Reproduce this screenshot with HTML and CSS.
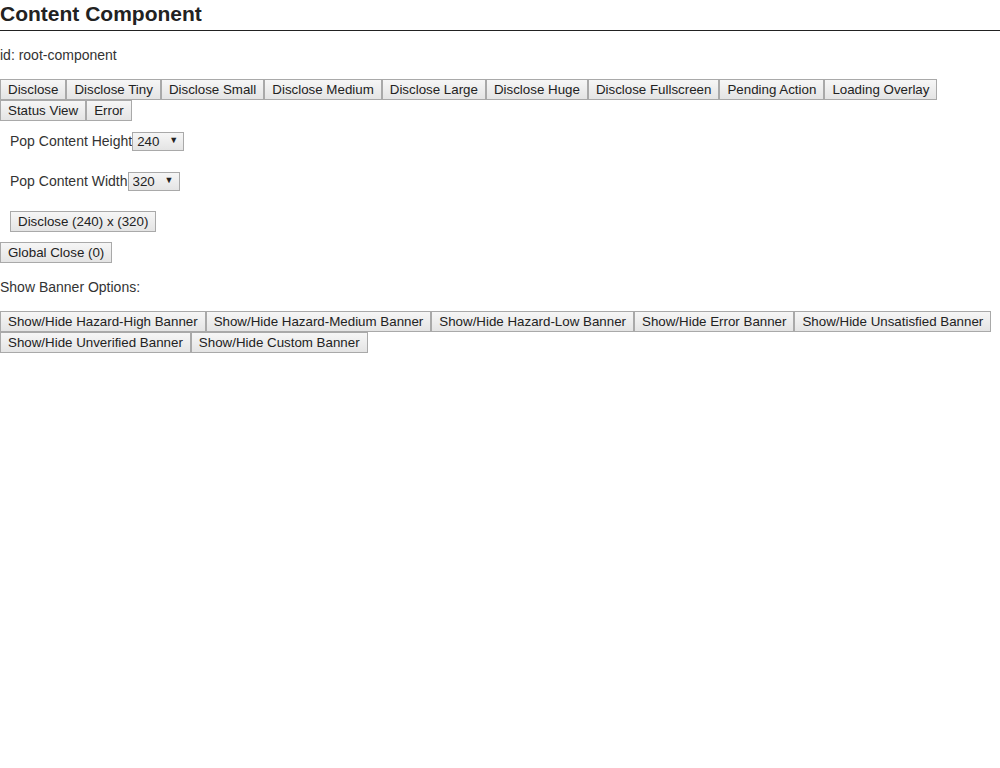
FILE: index.html
```html
<!DOCTYPE html>
<html>
<head>
<meta charset="utf-8">
<link rel="stylesheet" href="styles.css">
</head>
<body>
<h1 class="title">Content Component</h1>
<p class="ident">id: root-component</p>
<div class="btn-row">
  <button class="btn">Disclose</button><button class="btn">Disclose Tiny</button><button class="btn">Disclose Small</button><button class="btn">Disclose Medium</button><button class="btn">Disclose Large</button><button class="btn">Disclose Huge</button><button class="btn">Disclose Fullscreen</button><button class="btn">Pending Action</button><button class="btn">Loading Overlay</button><button class="btn">Status View</button><button class="btn">Error</button>
</div>
<div class="pop">
  <div class="field">
    <span class="label">Pop Content Height</span>
    <span class="select-wrap"><select class="select"><option>240</option></select></span>
  </div>
  <div class="field">
    <span class="label">Pop Content Width</span>
    <span class="select-wrap"><select class="select"><option>320</option></select></span>
  </div>
  <button class="btn">Disclose (240) x (320)</button>
</div>
<div class="btn-row">
  <button class="btn">Global Close (0)</button>
</div>
<p class="banner-title">Show Banner Options:</p>
<div class="btn-row">
  <button class="btn">Show/Hide Hazard-High Banner</button><button class="btn">Show/Hide Hazard-Medium Banner</button><button class="btn">Show/Hide Hazard-Low Banner</button><button class="btn">Show/Hide Error Banner</button><button class="btn">Show/Hide Unsatisfied Banner</button><button class="btn">Show/Hide Unverified Banner</button><button class="btn">Show/Hide Custom Banner</button>
</div>
</body>
</html>
```
FILE: styles.css
```css
html, body {
  margin: 0;
  padding: 0;
  background: #fff;
}
body {
  font-family: "Liberation Sans", Arial, sans-serif;
  font-size: 14px;
  color: #333;
}
.title {
  margin: 0;
  font-size: 21px;
  font-weight: bold;
  color: #222;
  line-height: 24px;
  padding: 2px 0 4px;
  border-bottom: 1px solid #222;
}
.ident {
  margin: 16px 0;
  line-height: 16px;
}
.btn-row {
  display: flex;
  flex-wrap: wrap;
  align-items: flex-start;
}
.btn {
  font-family: "Liberation Sans", Arial, sans-serif;
  font-size: 13.333px;
  color: #222;
  height: 21px;
  line-height: 17px;
  padding: 1px 7px;
  margin: 0;
  border: 1px solid #a9a9a9;
  border-radius: 0;
  background: linear-gradient(#f6f6f6, #e4e4e4);
  box-sizing: border-box;
  white-space: nowrap;
}
.pop {
  padding: 10px;
  display: flex;
  flex-direction: column;
  align-items: flex-start;
  gap: 20px;
}
.field {
  display: flex;
  align-items: center;
  height: 20px;
}
.label {
  line-height: 16px;
}
.select-wrap {
  position: relative;
  display: inline-block;
}
.select-wrap::after {
  content: "\25BC";
  position: absolute;
  right: 6px;
  top: 3px;
  font-size: 9px;
  color: #222;
  pointer-events: none;
}
.select {
  appearance: none;
  -webkit-appearance: none;
  display: block;
  font-family: "Liberation Sans", Arial, sans-serif;
  font-size: 13.333px;
  color: #222;
  width: 52px;
  height: 19px;
  padding: 0 0 0 4px;
  margin: 0;
  border: 1px solid #a9a9a9;
  border-radius: 0;
  background: linear-gradient(#f6f6f6, #e4e4e4);
  box-sizing: border-box;
}
.banner-title {
  margin: 16px 0;
  line-height: 16px;
}
```
